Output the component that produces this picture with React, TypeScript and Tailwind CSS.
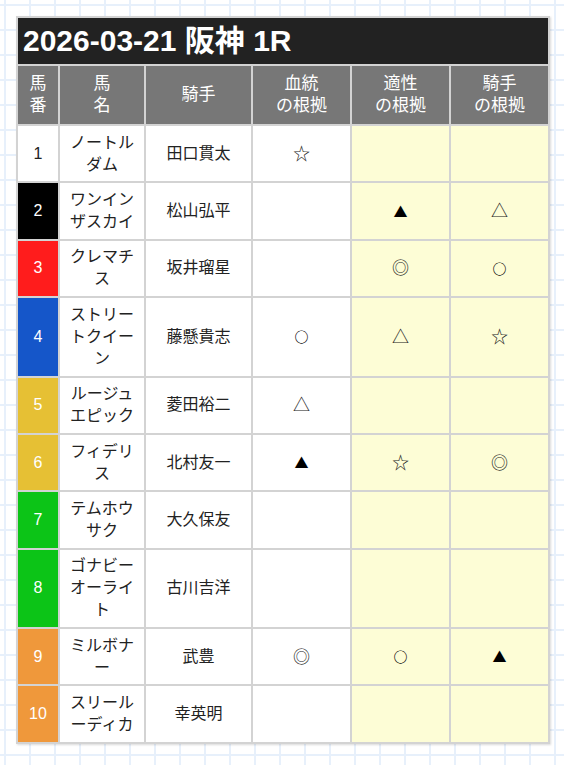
import React from "react";

type Row = {
  no: number;
  name: string;
  jockey: string;
  blood: string;
  fit: string;
  rider: string;
  bg: string;
  fg: string;
};

const rows: Row[] = [
  { no: 1, name: "ノートルダム", jockey: "田口貫太", blood: "☆", fit: "", rider: "", bg: "bg-white", fg: "text-[#222]" },
  { no: 2, name: "ワンインザスカイ", jockey: "松山弘平", blood: "", fit: "▲", rider: "△", bg: "bg-black", fg: "text-white" },
  { no: 3, name: "クレマチス", jockey: "坂井瑠星", blood: "", fit: "◎", rider: "○", bg: "bg-[#ff1c1c]", fg: "text-white" },
  { no: 4, name: "ストリートクイーン", jockey: "藤懸貴志", blood: "○", fit: "△", rider: "☆", bg: "bg-[#1556c9]", fg: "text-white" },
  { no: 5, name: "ルージュエピック", jockey: "菱田裕二", blood: "△", fit: "", rider: "", bg: "bg-[#e6c034]", fg: "text-white" },
  { no: 6, name: "フィデリス", jockey: "北村友一", blood: "▲", fit: "☆", rider: "◎", bg: "bg-[#e6c034]", fg: "text-white" },
  { no: 7, name: "テムホウサク", jockey: "大久保友", blood: "", fit: "", rider: "", bg: "bg-[#0cc417]", fg: "text-white" },
  { no: 8, name: "ゴナビーオーライト", jockey: "古川吉洋", blood: "", fit: "", rider: "", bg: "bg-[#0cc417]", fg: "text-white" },
  { no: 9, name: "ミルボナー", jockey: "武豊", blood: "◎", fit: "○", rider: "▲", bg: "bg-[#ef983b]", fg: "text-white" },
  { no: 10, name: "スリールーディカ", jockey: "幸英明", blood: "", fit: "", rider: "", bg: "bg-[#ef983b]", fg: "text-white" },
];

const cell = "border-2 border-[#d3d3d3] text-center align-middle py-[5.7px] px-[8px] leading-[22px]";
const head = "border-2 border-[#d3d3d3] bg-[#777777] text-white text-center align-middle py-[7px] px-[4px] leading-[22px] font-normal text-[17px]";

// marks look better in the CJK face than in Liberation; ○ and ▲ run large there
const Mark = ({ m }: { m: string }) => {
  if (!m) return null;
  const small = m === "○" || m === "▲";
  return (
    <span
      className={
        small
          ? "font-['Noto_Sans_CJK_JP',sans-serif] text-[14px] font-bold text-black"
          : "font-['Noto_Sans_CJK_JP',sans-serif] text-[17px]"
      }
    >
      {m}
    </span>
  );
};

export default function App() {
  return (
    <div className="min-h-screen w-full bg-white bg-[linear-gradient(to_right,#e7f0fb_2px,transparent_2px),linear-gradient(to_bottom,#e7f0fb_2px,transparent_2px)] bg-[size:25px_25px] bg-[position:4px_4px] p-4 font-['Liberation_Sans','Noto_Sans_CJK_JP',sans-serif] text-[16px] text-[#222]">
      <table className="w-[532px] table-fixed border-collapse shadow-[1px_1px_2px_rgba(0,0,0,0.15)]">
        <colgroup>
          <col className="w-[42px]" />
          <col className="w-[86px]" />
          <col className="w-[107px]" />
          <col className="w-[99px]" />
          <col className="w-[99px]" />
          <col className="w-[99px]" />
        </colgroup>
        <thead>
          <tr>
            <th
              colSpan={6}
              className="border-2 border-[#d3d3d3] bg-[#222222] text-white text-left font-bold text-[30px] leading-[34px] py-[6px] px-[5px]"
            >
              2026-03-21 阪神 1R
            </th>
          </tr>
          <tr>
            <th className={head}>
              馬<br />番
            </th>
            <th className={head}>
              馬<br />名
            </th>
            <th className={head}>騎手</th>
            <th className={head}>
              血統<br />の根拠
            </th>
            <th className={head}>
              適性<br />の根拠
            </th>
            <th className={head}>
              騎手<br />の根拠
            </th>
          </tr>
        </thead>
        <tbody>
          {rows.map((r) => (
            <tr key={r.no}>
              <td className={`${cell} ${r.bg} ${r.fg} px-[2px]`}>{r.no}</td>
              <td className={`${cell} bg-white break-all`}>{r.name}</td>
              <td className={`${cell} bg-white`}>{r.jockey}</td>
              <td className={`${cell} bg-white`}>
                <Mark m={r.blood} />
              </td>
              <td className={`${cell} bg-[#fdfdd6]`}>
                <Mark m={r.fit} />
              </td>
              <td className={`${cell} bg-[#fdfdd6]`}>
                <Mark m={r.rider} />
              </td>
            </tr>
          ))}
        </tbody>
      </table>
    </div>
  );
}
